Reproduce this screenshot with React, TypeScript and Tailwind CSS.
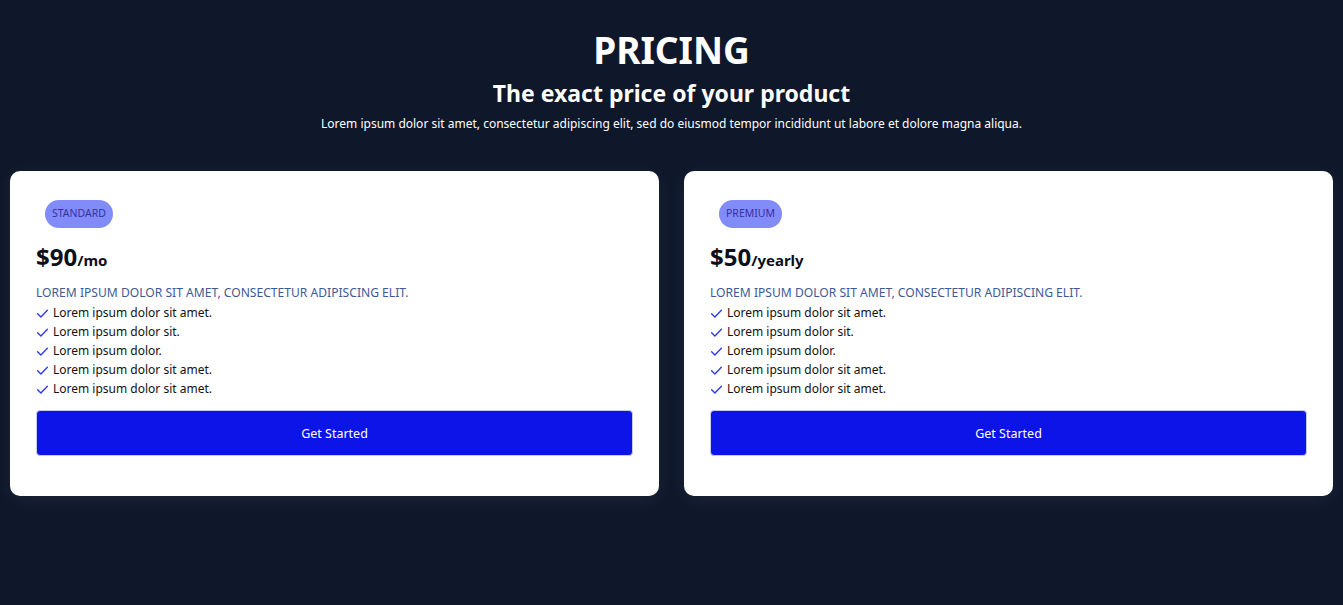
import React from "react";

const features = [
  "Lorem ipsum dolor sit amet.",
  "Lorem ipsum dolor sit.",
  "Lorem ipsum dolor.",
  "Lorem ipsum dolor sit amet.",
  "Lorem ipsum dolor sit amet.",
];

function Check() {
  return (
    <svg width="13" height="13" viewBox="0 0 24 24" fill="none" stroke="#2f3de6" strokeWidth="2.6" strokeLinecap="round" strokeLinejoin="round" className="shrink-0">
      <path d="M3 12.5l6 6L21 6" />
    </svg>
  );
}

function Card({ badge, price, unit }: { badge: string; price: string; unit: string }) {
  return (
    <div className="flex-1 rounded-[10px] bg-white px-[26px] pt-[28px] pb-[40px] shadow-[0_4px_20px_rgba(255,255,255,0.06)]">
      <div className="ml-[9px] inline-flex h-[28px] items-center rounded-[14px] bg-[#818cf8] px-[7px] text-[10.5px] text-[#3730a3]">
        {badge}
      </div>
      <div className="mt-[14px] flex items-baseline font-bold text-[#0b0f19]">
        <span className="text-[24px] leading-[30px]">{price}</span>
        <span className="text-[15px]">{unit}</span>
      </div>
      <div className="mt-[11px] mb-[2px] text-[12.1px] leading-[19px] text-[#3e5a96]">
        LOREM IPSUM DOLOR SIT AMET, CONSECTETUR ADIPISCING ELIT.
      </div>
      <ul>
        {features.map((f, i) => (
          <li key={i} className="flex h-[19px] items-center gap-[4px] text-[12px] text-[#111]">
            <Check />
            <span>{f}</span>
          </li>
        ))}
      </ul>
      <button className="mt-[11px] flex h-[46px] w-full items-center justify-center rounded-[4px] border border-[#c7cbe8] bg-[#0c14e8] pt-[2px] text-[12.5px] text-white">
        Get Started
      </button>
    </div>
  );
}

export default function App() {
  return (
    <div
      className="min-h-[605px] bg-[#0f172a] px-[10px] pt-[28px]"
      style={{ fontFamily: "'Segoe UI', 'Noto Sans', 'Open Sans', sans-serif" }}
    >
      <div className="flex flex-col items-center text-white">
        <h1 className="text-[37px] font-bold leading-[44px]">PRICING</h1>
        <h2 className="mt-[6px] text-[23px] font-bold leading-[30px]">The exact price of your product</h2>
        <p className="mt-[6px] text-[12px] leading-[20px]">
          Lorem ipsum dolor sit amet, consectetur adipiscing elit, sed do eiusmod tempor incididunt ut labore et dolore magna aliqua.
        </p>
      </div>
      <div className="mt-[37px] flex gap-[25px]">
        <Card badge="STANDARD" price="$90" unit="/mo" />
        <Card badge="PREMIUM" price="$50" unit="/yearly" />
      </div>
    </div>
  );
}
